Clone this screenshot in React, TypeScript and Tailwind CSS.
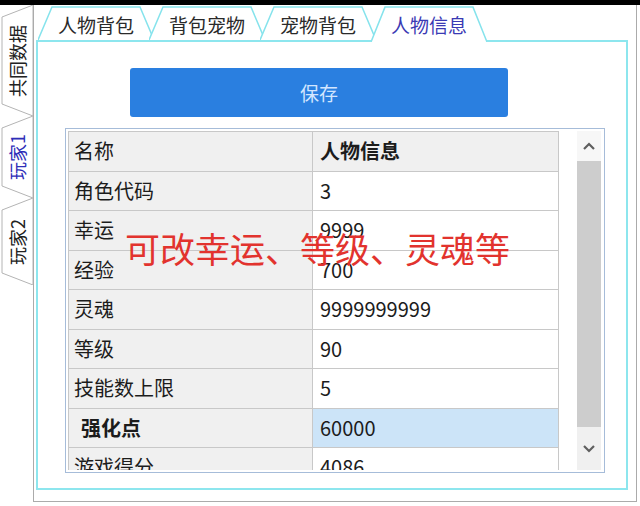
import React from 'react';

const rows = [
  { k: '角色代码', v: '3' },
  { k: '幸运', v: '9999' },
  { k: '经验', v: '700' },
  { k: '灵魂', v: '9999999999' },
  { k: '等级', v: '90' },
  { k: '技能数上限', v: '5' },
  { k: '强化点', v: '60000', hot: true },
  { k: '游戏得分', v: '4086' },
];

const topTabs = ['人物背包', '背包宠物', '宠物背包', '人物信息'];

function SideTab({ label, h, active }: { label: string; h: number; active?: boolean }) {
  return (
    <div className="relative w-[33px] flex items-center justify-center" style={{ height: h }}>
      <svg className="absolute inset-0 w-full h-full" viewBox={`0 0 33 ${h}`} preserveAspectRatio="none">
        <polygon
          points={`33,0 2,12 2,${h - 12} 33,${h}`}
          fill="#ffffff"
          stroke="#b4b4b4"
          strokeWidth="1"
        />
      </svg>
      <span
        className={`relative rotate-180 [writing-mode:vertical-rl] [text-orientation:sideways] text-[18px] leading-none ${
          active ? 'text-[#2e2eb8]' : 'text-[#222]'
        }`}
      >
        {label}
      </span>
    </div>
  );
}

function TopTab({ label, active }: { label: string; active?: boolean }) {
  return (
    <div
      className={`relative w-[116px] -ml-[5px] first:ml-0 flex items-center justify-center ${
        active ? 'z-10 h-[37px] -mb-[2px] pb-[2px]' : 'h-[35px]'
      }`}
    >
      <svg className="absolute inset-0 w-full h-full" viewBox="0 0 116 35" preserveAspectRatio="none">
        <polygon points="0,35 14,2 102,2 116,35" fill="#ffffff" />
        <polyline
          points="0,35 14,2 102,2 116,35"
          fill="none"
          stroke="#86e3ec"
          strokeWidth="1.5"
          vectorEffect="non-scaling-stroke"
        />
      </svg>
      <span className={`relative pt-[3px] text-[19px] leading-none ${active ? 'text-[#3a3ab4]' : 'text-[#2a2a2a]'}`}>
        {label}
      </span>
    </div>
  );
}

function Chevron({ up }: { up?: boolean }) {
  return (
    <svg width="12" height="8" viewBox="0 0 12 8">
      <polyline
        points={up ? '1,7 6,2 11,7' : '1,1 6,6 11,1'}
        fill="none"
        stroke="#5f5f5f"
        strokeWidth="2.2"
      />
    </svg>
  );
}

export default function App() {
  return (
    <div className="relative w-[640px] h-[506px] bg-white overflow-hidden font-['Noto_Sans_CJK_SC','Open_Sans',sans-serif]">
      <div className="h-[5px] bg-black" />
      <div className="flex h-[497px]">
        {/* side tabs */}
        <div className="w-[33px] flex flex-col">
          <SideTab label="共同数据" h={111} />
          <SideTab label="玩家1" h={82} active />
          <SideTab label="玩家2" h={87} />
        </div>

        {/* frame */}
        <div className="w-[604px] h-full border-l border-r border-b border-[#ababab]">
          <div className="flex items-end h-[35px] pl-[4px]">
            {topTabs.map((t, i) => (
              <TopTab key={t} label={t} active={i === 3} />
            ))}
          </div>

          <div className="ml-[2px] w-[592px] h-[450px] border-2 border-[#8de6ee]">
            <button className="mt-[26px] ml-[92px] w-[378px] h-[49px] rounded-[3px] bg-[#2a7fe0] text-[#d3e6ff] text-[19px] leading-none flex items-center justify-center">
              保存
            </button>

            <div className="mt-[11px] ml-[27px] w-[540px] h-[345px] border border-[#a6bcd9] p-[2px] flex justify-between">
              <div className="w-[491px] h-full overflow-hidden border-t border-[#c8c8c8] text-[20px] leading-none text-[#1c1c1c]">
                <div className="flex h-[39.5px] border-b border-[#c8c8c8]">
                  <div className="w-[245px] shrink-0 flex items-center pl-[5px] bg-[#f0f0f0] border-l border-r border-[#c8c8c8]">
                    名称
                  </div>
                  <div className="flex-1 flex items-center pl-[7px] bg-[#f0f0f0] border-r border-[#c8c8c8] font-bold">
                    人物信息
                  </div>
                </div>
                {rows.map((r) => (
                  <div key={r.k} className="flex h-[39.5px] shrink-0 border-b border-[#c8c8c8]">
                    <div
                      className={`w-[245px] shrink-0 flex items-center bg-[#f0f0f0] border-l border-r border-[#c8c8c8] ${
                        r.hot ? 'pl-[12px] font-bold' : 'pl-[5px]'
                      }`}
                    >
                      {r.k}
                    </div>
                    <div
                      className={`flex-1 flex items-center pl-[7px] border-r border-[#c8c8c8] ${
                        r.hot ? 'bg-[#cce4f8]' : 'bg-white'
                      }`}
                    >
                      {r.v}
                    </div>
                  </div>
                ))}
              </div>

              {/* scrollbar */}
              <div className="w-[24px] mr-[1px] h-full flex flex-col bg-[#f0f0f0]">
                <div className="h-[30px] flex items-center justify-center bg-[#f7f7f7]">
                  <Chevron up />
                </div>
                <div className="h-[266px] bg-[#cdcdcd]" />
                <div className="flex-1 flex items-center justify-center">
                  <Chevron />
                </div>
              </div>
            </div>
          </div>
        </div>
      </div>

      {/* annotation */}
      <div className="absolute left-[125px] top-[230px] text-[35px] leading-none text-[#e2332e] whitespace-nowrap">
        可改幸运、等级、灵魂等
      </div>
    </div>
  );
}
